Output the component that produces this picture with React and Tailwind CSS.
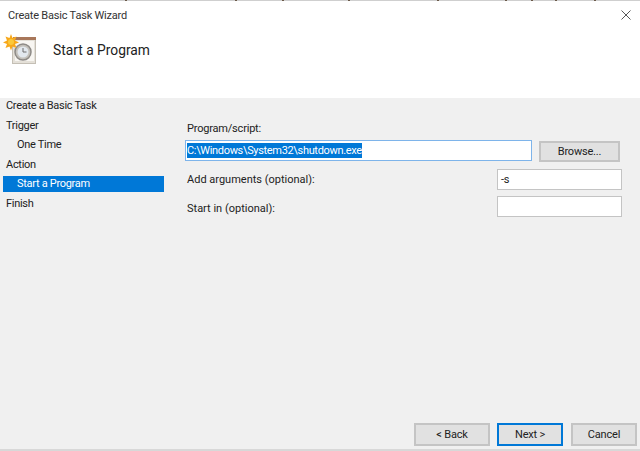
import React from 'react';

const steps = [
  { label: 'Create a Basic Task' },
  { label: 'Trigger' },
  { label: 'One Time', sub: true },
  { label: 'Action' },
  { label: 'Start a Program', sub: true, active: true },
  { label: 'Finish' },
];

const ticks = [125, 235, 282, 348, 437, 505, 531, 555, 594];

function TaskIcon() {
  return (
    <svg width="34" height="32" viewBox="0 0 34 32" className="shrink-0">
      <rect x="10.500" y="5.500" width="23" height="24" fill="#e4e0d8" stroke="#c4bfb5" />
      <rect x="11" y="3" width="23" height="3" fill="#a8775a" />
      <rect x="13" y="7" width="19" height="20" fill="#f8f6f2" />
      <circle cx="21" cy="18" r="8" fill="#c4c1bb" stroke="#8d8a86" strokeWidth="1.500" />
      <circle cx="21" cy="18" r="5.500" fill="#e2e8ee" />
      <path d="M21 14v4h3.500" fill="none" stroke="#6d6d6d" strokeWidth="1" />
      <path
        d="M9 0l1.500 4 4-1.500-1.500 4 4 2-4 1.500 1.500 4-4-1.500-1.500 4-1.500-4-4 1.500 1.500-4-4-1.500 4-2-1.500-4 4 1.500z"
        fill="#f7a81b"
      />
      <circle cx="9" cy="8" r="3" fill="#fbc93a" />
    </svg>
  );
}

function Button({ children, primary, className }) {
  return (
    <button
      className={`bg-[#e1e1e1] text-[#222] border-2 ${
        primary ? 'border-[#0078d7]' : 'border-[#c4c4c4]'
      } ${className}`}
    >
      {children}
    </button>
  );
}

export default function App() {
  return (
    <div className="w-[640px] h-[451px] flex flex-col bg-white text-[11px] tracking-[-0.2px] leading-[15px] text-[#222] font-['Roboto','Open_Sans',sans-serif] overflow-hidden">
      {/* sliver of the window behind */}
      <svg width="640" height="1" className="block shrink-0">
        <rect width="640" height="1" fill="#cfcfcf" />
        {ticks.map((x) => (
          <rect key={x} x={x} width="2" height="1" fill="#6b5a4a" />
        ))}
      </svg>
      <div className="h-[97px] shrink-0 bg-white flex flex-col">
        <div className="h-[24px] pt-[7px] pl-[8px] flex justify-between text-[#333]">
          <span>Create Basic Task Wizard</span>
          <svg width="10" height="10" viewBox="0 0 10 10" className="mr-[9px] mt-[2px]">
            <path d="M0.500 0.500l9 9M9.500 0.500l-9 9" stroke="#444" strokeWidth="0.900" />
          </svg>
        </div>
        <div className="flex items-start pl-[2px] pt-[9px]">
          <TaskIcon />
          <span className="ml-[17px] mt-[6px] text-[13.8px] tracking-normal leading-[20px] text-[#222]">
            Start a Program
          </span>
        </div>
      </div>

      <div className="flex-1 flex bg-[#f0f0f0] border-b-2 border-[#d8d8d8]">
        <div className="w-[164px] shrink-0 -mt-[0.5px] pl-[3px] flex flex-col gap-[3.500px] tracking-[-0.3px]">
          {steps.map((step) => (
            <div
              key={step.label}
              className={`h-[16px] flex items-center ${step.sub ? 'pl-[14px]' : 'pl-[3px]'} ${
                step.active ? 'bg-[#0078d7] text-white' : ''
              }`}
            >
              {step.label}
            </div>
          ))}
        </div>

        <div className="flex-1 flex flex-col pl-[23px] pr-[18px]">
          <div className="mt-[23px] h-[15px]">Program/script:</div>
          <div className="mt-[4px] -ml-[2px] flex items-start">
            <div className="w-[347px] h-[21px] bg-white border border-[#7eb4ea] flex items-center pl-[1px]">
              <span className="bg-[#0078d7] text-white leading-[15px] tracking-[-0.33px]">
                C:\Windows\System32\shutdown.exe
              </span>
            </div>
            <Button className="w-[81px] h-[21px] mt-[1px] mr-[2px] ml-auto">Browse...</Button>
          </div>
          <div className="mt-[7px] flex justify-between items-center">
            <span className="tracking-normal">Add arguments (optional):</span>
            <div className="w-[125px] h-[21px] bg-white border border-[#c4c4c4] flex items-center pl-[3px]">
              -s
            </div>
          </div>
          <div className="mt-[6px] flex justify-between items-center">
            <span className="mt-[3px] tracking-normal">Start in (optional):</span>
            <div className="w-[125px] h-[21px] bg-white border border-[#c4c4c4]" />
          </div>
          <div className="mt-auto mb-[3px] -mr-[15px] flex justify-end">
            <Button className="w-[76px] h-[23px]">&lt; Back</Button>
            <Button primary className="w-[66px] h-[23px] ml-[7px]">Next &gt;</Button>
            <Button className="w-[66px] h-[23px] ml-[8px]">Cancel</Button>
          </div>
        </div>
      </div>
    </div>
  );
}
